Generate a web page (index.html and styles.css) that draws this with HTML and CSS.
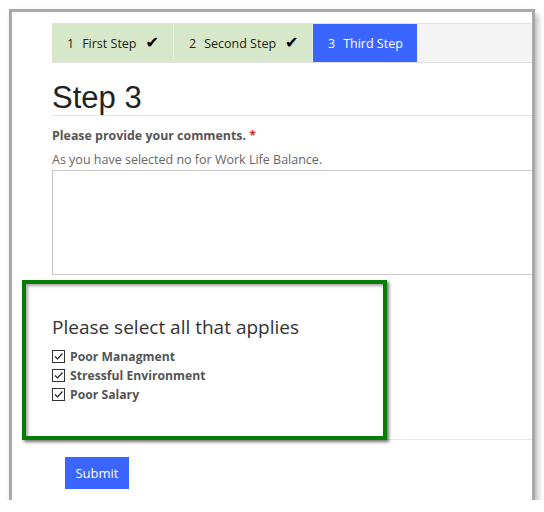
FILE: index.html
```html
<!DOCTYPE html>
<html>
<head>
<meta charset="utf-8">
<link rel="stylesheet" href="styles.css">
</head>
<body>
<div class="frame">
  <div class="content">
    <div class="steps">
      <div class="step done">1<span class="name">First Step</span><span class="tick">✔</span></div>
      <div class="step done">2<span class="name">Second Step</span><span class="tick">✔</span></div>
      <div class="step active">3<span class="name">Third Step</span></div>
    </div>
    <h1 class="title">Step 3</h1>
    <div class="label">Please provide your comments. <span class="req">*</span></div>
    <div class="desc">As you have selected no for Work Life Balance.</div>
    <div class="textarea"></div>
    <div class="applies">
      <div class="highlight"></div>
      <div class="applies-title">Please select all that applies</div>
      <div class="opts">
        <label class="opt"><span class="cb"><svg width="11" height="11" viewBox="0 0 11 11"><path d="M2 5.5 L4.5 8 L9.5 2.5" fill="none" stroke="#222" stroke-width="1.2"/></svg></span>Poor Managment</label>
        <label class="opt"><span class="cb"><svg width="11" height="11" viewBox="0 0 11 11"><path d="M2 5.5 L4.5 8 L9.5 2.5" fill="none" stroke="#222" stroke-width="1.2"/></svg></span>Stressful Environment</label>
        <label class="opt"><span class="cb"><svg width="11" height="11" viewBox="0 0 11 11"><path d="M2 5.5 L4.5 8 L9.5 2.5" fill="none" stroke="#222" stroke-width="1.2"/></svg></span>Poor Salary</label>
      </div>
    </div>
    <div class="actions">
      <button class="submit">Submit</button>
    </div>
  </div>
</div>
</body>
</html>
```
FILE: styles.css
```css
html, body { margin: 0; padding: 0; background: #fff; }
body { font-family: "Open Sans", "Noto Sans", sans-serif; color: #333; }
.frame {
  margin: 12px 0 0 12px;
  width: 520px;
  height: 488px;
  background: #fff;
  overflow: hidden;
  box-shadow: 0 0 0 3px #a9a9a9, 3px 4px 7px 2px rgba(0,0,0,0.35);
}
.content { padding-left: 40px; }
.steps {
  margin-top: 11px;
  display: flex;
  height: 38px;
  background: #f4f4f4;
  border-top: 1px solid #e2e2e2;
  border-bottom: 1px solid #e2e2e2;
  width: 600px;
  font-size: 12.5px;
}
.step {
  display: flex;
  align-items: center;
  padding: 0 0 0 15px;
  color: #222;
  box-sizing: border-box;
  white-space: nowrap;
  flex-shrink: 0;
}
.step.done { background: #d6e8c9; border-right: 1px solid #e6efe0; }
.step.done:first-child { width: 122px; }
.step.done:nth-child(2) { width: 139px; }
.step.active { background: #3a66ff; color: #fff; width: 104px; }
.step .name { margin-left: 8px; }
.tick { margin-left: 9px; font-family: "DejaVu Sans", sans-serif; font-size: 16px; line-height: 16px; color: #000; }
.title {
  margin: 18px 0 0 0;
  font-family: "Liberation Sans", Arial, sans-serif;
  font-weight: normal;
  font-size: 31px;
  line-height: 34px;
  color: #222;
  padding-bottom: 0;
  border-bottom: 1px solid #e6e6e6;
  width: 600px;
}
.label {
  margin-top: 11px;
  font-size: 12.4px;
  font-weight: bold;
  color: #555;
  line-height: 18px;
}
.req { color: #c9302c; }
.desc {
  margin-top: 6px;
  font-size: 12.5px;
  color: #666;
  line-height: 17px;
}
.textarea {
  margin-top: 2px;
  width: 600px;
  height: 105px;
  border: 1px solid #c8c8c8;
  box-sizing: border-box;
}
.applies {
  position: relative;
  padding-top: 40px;
  padding-bottom: 35px;
  border-bottom: 1px solid #e6e6e6;
  width: 600px;
}
.highlight {
  position: absolute;
  left: -30px;
  top: 5px;
  width: 357px;
  height: 152px;
  border: 4px solid #077d07;
  box-shadow: 2px 2px 3px rgba(0,0,0,0.55), inset 2px 2px 3px rgba(0,0,0,0.35);
  pointer-events: none;
}
.applies-title {
  font-size: 19px;
  line-height: 24px;
  color: #333;
}
.opts { margin-top: 8px; display: flex; flex-direction: column; }
.opt {
  display: flex;
  align-items: center;
  font-size: 12.2px;
  font-weight: bold;
  color: #555;
  line-height: 19px;
}
.cb {
  width: 11px;
  height: 11px;
  border: 1px solid #333;
  background: #fff;
  margin-right: 5px;
  display: flex;
}
.actions { padding: 17px 0 0 13px; }
.submit {
  width: 64px;
  height: 32px;
  background: #3a66ff;
  color: #fff;
  border: none;
  font-family: "Open Sans", sans-serif;
  font-size: 13px;
  padding: 0;
}
```
